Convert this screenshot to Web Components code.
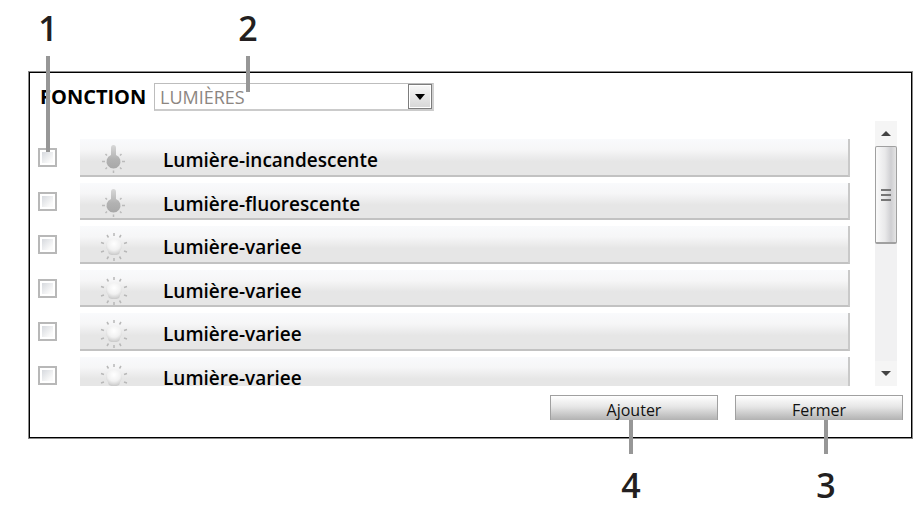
<!DOCTYPE html>
<html lang="fr">
<head>
<meta charset="utf-8">
<meta name="viewport" content="width=device-width, initial-scale=1">
<title>Fonction</title>
<style>
body {
    margin: 0;
    padding: 71px 0 72px 28px;
    background: #fff;
    color: #000;
    font-family: "Open Sans", "Noto Sans", sans-serif;
}
</style>
</head>
<body>
<function-panel>
    <function-select slot="header" label="FONCTION"></function-select>

    <light-row kind="bulb">Lumière-incandescente</light-row>
    <light-row kind="bulb">Lumière-fluorescente</light-row>
    <light-row kind="dimmer">Lumière-variee</light-row>
    <light-row kind="dimmer">Lumière-variee</light-row>
    <light-row kind="dimmer">Lumière-variee</light-row>
    <light-row kind="dimmer">Lumière-variee</light-row>

    <panel-button slot="actions">Ajouter</panel-button>
    <panel-button slot="actions">Fermer</panel-button>

    <call-out slot="marks" class="one" length="96">1</call-out>
    <call-out slot="marks" class="two" length="36">2</call-out>
    <call-out slot="marks" class="three" side="bottom" length="34">3</call-out>
    <call-out slot="marks" class="four" side="bottom" length="34">4</call-out>
</function-panel>

<script>
class FunctionPanel extends HTMLElement {
    constructor() {
        super();
        this._shadowDom = this.attachShadow({mode: 'open'});
    }

    connectedCallback() {
        this._shadowDom.innerHTML =
        `
        <style>
        * {
            box-sizing: border-box;
        }

        :host {
            display: block;
            position: relative;
        }

        .panel {
            border: 1px solid #8a8a8a;
            box-shadow: inset 0 0 0 1px #000;
            padding: 11px 9px 18px;
        }

        .body {
            display: flex;
            gap: 25px;
            height: 265px;
            margin: 10px 6px 9px 0;
        }

        .list {
            flex: 1;
            min-width: 0;
            overflow: hidden;
            padding-top: 18px;
        }

        .rows {
            display: grid;
            grid-template-rows: repeat(6, 1fr);
            gap: 6px;
            height: 255px;
        }

        .actions {
            display: flex;
            justify-content: flex-end;
            gap: 17px;
        }

        /* numbered marks lie over the panel and its border */
        ::slotted(call-out) {
            position: absolute;
        }

        ::slotted(.one) {
            left: 8px;
            bottom: calc(100% - 81px);
        }

        ::slotted(.two) {
            left: 208px;
            bottom: calc(100% - 21px);
        }

        ::slotted(.three) {
            right: 75px;
            top: calc(100% - 19px);
        }

        ::slotted(.four) {
            right: 270px;
            top: calc(100% - 19px);
        }
        </style>
        <section class="panel">
            <slot name="header"></slot>
            <div class="body">
                <div class="list"><div class="rows"><slot></slot></div></div>
                <scroll-bar></scroll-bar>
            </div>
            <div class="actions"><slot name="actions"></slot></div>
        </section>
        <slot name="marks"></slot>
        `
    }
}

class FunctionSelect extends HTMLElement {
    constructor() {
        super();
        this._shadowDom = this.attachShadow({mode: 'open'});
    }

    connectedCallback() {
        this._shadowDom.innerHTML =
        `
        <style>
        * {
            box-sizing: border-box;
        }

        :host {
            display: flex;
            align-items: center;
            padding-left: 2px;
        }

        label {
            width: 114px;
            font-size: 20px;
            line-height: 28px;
            font-weight: 700;
        }

        .box {
            display: grid;
            grid-template-columns: 1fr 24px;
            width: 280px;
            height: 28px;
            border: 1px solid #bdbdbd;
            border-right: 2px solid #d2d2d2;
            border-bottom: 2px solid #cbcbcb;
        }

        select {
            grid-area: 1 / 1 / 2 / 3;
            appearance: none;
            border: 0;
            margin: 0;
            padding: 0 0 0 5px;
            background: #fff;
            color: #8c8681;
            font: 18px/24px "Open Sans", "Noto Sans", sans-serif;
        }

        .arrow {
            grid-area: 1 / 2;
            display: grid;
            place-items: center;
            border: 1px solid #7d7d7d;
            box-shadow: inset 0 0 0 1px #fff;
            background: linear-gradient(#f8f8f8, #d6d6d6);
            pointer-events: none;
        }
        </style>
        <label for="fn">${this.getAttribute('label')}</label>
        <div class="box">
            <select id="fn"><option>LUMIÈRES</option></select>
            <span class="arrow"><svg width="10" height="6"><path d="M0 0h10L5 6z"/></svg></span>
        </div>
        `
    }
}

const icons = {
    bulb: `
        <defs><linearGradient id="g" x1="0" y1="0" x2="0" y2="1">
            <stop offset="0" stop-color="#d8d8d8"/><stop offset=".6" stop-color="#b2b2b2"/><stop offset="1" stop-color="#a8a8a8"/>
        </linearGradient></defs>
        <path fill="url(#g)" d="M12 9Q12 6 14.500 6T17 9V16A7 7 0 1 1 12 16z"/>
        <path stroke="#bababa" stroke-width="1.500" d="M3 22.500h3M23 22.500h3M6.500 15l1.500 1.500M22.500 15l-1.500 1.500M6.500 30l1.500-1.500M22.500 30l-1.500-1.500M14.500 31.500v2.500"/>`,
    dimmer: `
        <defs><radialGradient id="g" cx=".5" cy=".3" r=".8">
            <stop offset="0" stop-color="#fff"/><stop offset=".5" stop-color="#f1f1f1"/><stop offset="1" stop-color="#bcbcbc"/>
        </radialGradient></defs>
        <path fill="url(#g)" d="M15 13c5 0 8 3 8 7c0 3-2 4-2.500 7q-.5 2-5.500 2t-5.500-2c-.5-3-2.500-4-2.500-7c0-4 3-7 8-7z"/>
        <path stroke="#b8b8b8" stroke-width="1.500" d="M15 7v3M15 32v3M8 9l1.500 2.500M22 9l-1.500 2.500M2 16.500l3 1M28 16.500l-3 1M2 26l3-1M28 26l-3-1M8 33l1.500-2.500M22 33l-1.500-2.500"/>`
};

class LightRow extends HTMLElement {
    constructor() {
        super();
        this._shadowDom = this.attachShadow({mode: 'open'});
    }

    connectedCallback() {
        this._shadowDom.innerHTML =
        `
        <style>
        * {
            box-sizing: border-box;
        }

        :host {
            display: flex;
            align-items: center;
            gap: 23px;
            min-height: 0;
        }

        input {
            appearance: none;
            flex: none;
            width: 19px;
            height: 19px;
            margin: 0;
            border: 2px solid #b8b8b8;
            padding: 2px;
            background: linear-gradient(135deg, #d6d9de, #fafafa 80%) content-box, #fff;
        }

        label {
            flex: 1;
            align-self: stretch;
            display: grid;
            grid-template-columns: 30px 1fr;
            gap: 34px;
            padding-left: 19px;
            background: linear-gradient(#f9fafc, #f6f6f7 30%, #e6e6e6 62%, #e6e6e6);
            border-right: 2px solid #c9c9c9;
            border-bottom: 2px solid #c2c2c2;
            overflow: hidden;
            white-space: nowrap;
            font-size: 19px;
            line-height: 24px;
            font-weight: 600;
        }

        .text {
            padding-top: 9px;
        }

        svg {
            fill: none;
        }
        </style>
        <input type="checkbox" id="pick">
        <label for="pick">
            <svg width="30" height="36" viewBox="0 0 30 36">${icons[this.getAttribute('kind')]}</svg>
            <span class="text"><slot></slot></span>
        </label>
        `
    }
}

class ScrollBar extends HTMLElement {
    constructor() {
        super();
        this._shadowDom = this.attachShadow({mode: 'open'});
    }

    connectedCallback() {
        this._shadowDom.innerHTML =
        `
        <style>
        * {
            box-sizing: border-box;
        }

        :host {
            display: flex;
            flex-direction: column;
            flex: none;
            width: 22px;
            background: #f1f1f2;
        }

        button {
            display: grid;
            place-items: center;
            height: 25px;
            border: 0;
            padding: 0;
            background: #f5f5f5;
        }

        .track {
            flex: 1;
        }

        .thumb {
            display: grid;
            place-items: center;
            height: 98px;
            border: 1px solid #a0a0a0;
            border-bottom-width: 2px;
            border-radius: 2px;
            background: linear-gradient(90deg, #fafafa, #e9e9ea 45%, #cfcfd2 75%, #e4e4e4);
        }
        </style>
        <button aria-label="Monter"><svg width="10" height="5"><path fill="#444" d="M0 5h10L5 0z"/></svg></button>
        <div class="track">
            <div class="thumb"><svg width="10" height="12"><path stroke="#777" stroke-width="2" d="M0 1h10M0 6h10M0 11h10"/></svg></div>
        </div>
        <button aria-label="Descendre"><svg width="10" height="5"><path fill="#444" d="M0 0h10L5 5z"/></svg></button>
        `
    }
}

class PanelButton extends HTMLElement {
    constructor() {
        super();
        this._shadowDom = this.attachShadow({mode: 'open'});
    }

    connectedCallback() {
        this._shadowDom.innerHTML =
        `
        <style>
        :host {
            display: block;
        }

        button {
            display: block;
            box-sizing: border-box;
            width: 168px;
            height: 25px;
            margin: 0;
            padding: 3px 0 0;
            border: 1px solid #a0a0a0;
            border-bottom: 0;
            background: linear-gradient(#fff, #e6e6e6 45%, #b2b2b2);
            color: #111;
            font: 16px/20px "Open Sans", "Noto Sans", sans-serif;
        }
        </style>
        <button><slot></slot></button>
        `
    }
}

class CallOut extends HTMLElement {
    constructor() {
        super();
        this._shadowDom = this.attachShadow({mode: 'open'});
    }

    connectedCallback() {
        this._shadowDom.innerHTML =
        `
        <style>
        :host {
            display: flex;
            flex-direction: column;
            align-items: center;
            width: 24px;
            color: #231f20;
            font-size: 34px;
            line-height: 36px;
            font-weight: 600;
            gap: 10px;
            pointer-events: none;
        }

        :host([side="bottom"]) {
            flex-direction: column-reverse;
            gap: 13px;
        }

        .line {
            width: 4px;
            height: ${this.getAttribute('length')}px;
            background: #979797;
        }
        </style>
        <slot></slot>
        <div class="line"></div>
        `
    }
}

customElements.define('function-panel', FunctionPanel);
customElements.define('function-select', FunctionSelect);
customElements.define('light-row', LightRow);
customElements.define('scroll-bar', ScrollBar);
customElements.define('panel-button', PanelButton);
customElements.define('call-out', CallOut);
</script>
</body>
</html>
